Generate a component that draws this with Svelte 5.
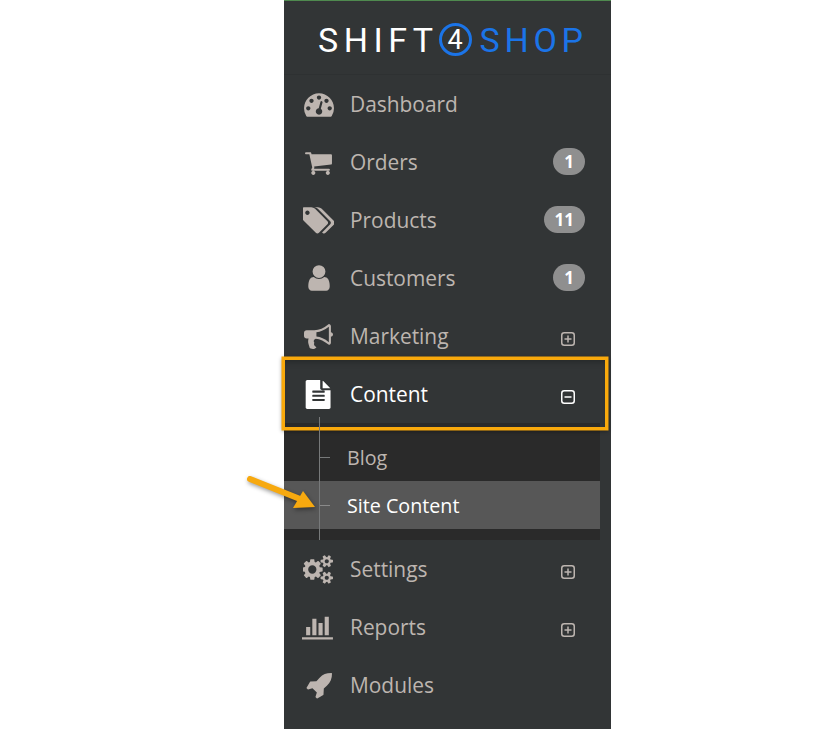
<script>
  const icons = {
    dashboard: { box: '0 0 1792 1792', d: 'M384 1152q0-53-37.500-90.500t-90.500-37.500-90.500 37.500-37.500 90.500 37.500 90.500 90.500 37.500 90.500-37.500 37.500-90.500zm192-448q0-53-37.500-90.500t-90.500-37.500-90.500 37.500-37.500 90.500 37.500 90.500 90.500 37.500 90.500-37.500 37.500-90.500zm428 481l101-382q6-26-7.500-48.500t-38.500-29.500-48 6.500-30 39.500l-101 382q-60 5-107 43.500t-63 98.500q-20 77 20 146t117 89 146-20 89-117q16-60-6-117t-72-91zm660-33q0-53-37.500-90.500t-90.500-37.500-90.500 37.500-37.500 90.500 37.500 90.500 90.500 37.500 90.500-37.500 37.500-90.500zm-640-640q0-53-37.500-90.500t-90.500-37.500-90.500 37.500-37.500 90.500 37.500 90.500 90.500 37.500 90.500-37.500 37.500-90.500zm448 192q0-53-37.500-90.500t-90.500-37.500-90.500 37.500-37.500 90.500 37.500 90.500 90.500 37.500 90.500-37.500 37.500-90.500zm320 448q0 261-141 483-19 29-54 29h-1402q-35 0-54-29-141-221-141-483 0-182 71-348t191-286 286-191 348-71 348 71 286 191 191 286 71 348z' },
    cart: { box: '0 0 1792 1792', d: 'M704 1536q0 52-38 90t-90 38-90-38-38-90 38-90 90-38 90 38 38 90zm896 0q0 52-38 90t-90 38-90-38-38-90 38-90 90-38 90 38 38 90zm128-1088v512q0 24-16.500 42.500t-40.500 21.500l-1044 122q13 60 13 70 0 16-24 64h920q26 0 45 19t19 45-19 45-45 19h-1024q-26 0-45-19t-19-45q0-11 8-31.500t16-36 21.500-40 15.500-29.500l-177-823h-204q-26 0-45-19t-19-45 19-45 45-19h256q16 0 28.500 6.500t19.500 15.500 13 24.500 8 26 5.500 29.500 4.500 26h1201q26 0 45 19t19 45z' },
    tags: { box: '0 0 1792 1792', d: 'M384 448q0-53-37.500-90.500t-90.500-37.500-90.500 37.500-37.500 90.500 37.500 90.500 90.500 37.500 90.500-37.500 37.500-90.500zm1067 576q0 53-37 90l-491 492q-39 37-91 37-53 0-90-37l-715-716q-38-37-64.500-101t-26.500-117v-416q0-52 38-90t90-38h416q53 0 117 26.500t102 64.500l715 714q37 39 37 91zm384 0q0 53-37 90l-491 492q-39 37-91 37-36 0-59-14t-53-45l470-470q37-37 37-90 0-52-37-91l-715-714q-38-38-102-64.500t-117-26.500h224q53 0 117 26.500t102 64.500l715 714q37 39 37 91z' },
    user: { box: '0 0 1792 1792', d: 'M1536 1399q0 109-62.500 187t-150.500 78h-854q-88 0-150.500-78t-62.500-187q0-85 8.500-160.500t31.500-152 58.500-131 94-89 134.500-34.500q131 128 313 128t313-128q76 0 134.500 34.500t94 89 58.500 131 31.500 152 8.500 160.500zm-256-887q0 159-112.500 271.500t-271.500 112.500-271.500-112.500-112.500-271.500 112.500-271.500 271.500-112.500 271.500 112.500 112.500 271.500z' },
    bullhorn: { box: '0 0 1792 1792', d: 'M1664 640q53 0 90.500 37.500t37.500 90.500-37.500 90.500-90.500 37.500v384q0 52-38 90t-90 38q-417-347-812-380-58 19-91 66t-31 100.500 40 92.500q-20 33-23 65.500t6 58 33.500 55 48 50 61.500 50.500q-29 58-111.500 83t-168.500 11.500-132-55.500q-7-23-29.500-87.500t-32-94.500-23-89-15-101 3.500-98.500 22-110.500h-122q-66 0-113-47t-47-113v-192q0-66 47-113t113-47h480q435 0 896-384 52 0 90 38t38 90v384zm-128 604v-954q-394 302-768 343v270q377 42 768 341z' },
    file: { box: '0 0 1792 1792', d: 'M1596 476q14 14 28 36h-472v-472q22 14 36 28zm-476 164h520v1056q0 40-28 68t-68 28h-1344q-40 0-68-28t-28-68v-1600q0-40 28-68t68-28h800v520q0 40 28 68t68 28zm160 624v-64q0-14-9-23t-23-9h-704q-14 0-23 9t-9 23v64q0 14 9 23t23 9h704q14 0 23-9t9-23zm0-256v-64q0-14-9-23t-23-9h-704q-14 0-23 9t-9 23v64q0 14 9 23t23 9h704q14 0 23-9t9-23zm0-256v-64q0-14-9-23t-23-9h-704q-14 0-23 9t-9 23v64q0 14 9 23t23 9h704q14 0 23-9t9-23z' },
    gears: { box: '0 0 1920 1792', d: 'M832 896q0-106-75-181t-181-75-181 75-75 181 75 181 181 75 181-75 75-181zm768 512q0-52-38-90t-90-38-90 38-38 90q0 53 37.500 90.500t90.500 37.500 90.500-37.500 37.500-90.500zm0-1024q0-52-38-90t-90-38-90 38-38 90q0 53 37.500 90.500t90.500 37.500 90.500-37.500 37.500-90.500zm-384 421v185q0 10-7 19.500t-16 10.500l-155 24q-11 35-32 76 34 48 90 115 7 11 7 20 0 12-7 19-23 30-82.500 89.500t-78.500 59.500q-11 0-21-7l-115-90q-37 19-77 31-11 108-23 155-7 24-30 24h-186q-11 0-20-7.500t-10-17.500l-23-153q-34-10-75-31l-118 89q-7 7-20 7-11 0-21-8-144-133-144-160 0-9 7-19 10-14 41-53t47-61q-23-44-35-82l-152-24q-10-1-17-9.500t-7-19.500v-185q0-10 7-19.500t16-10.500l155-24q11-35 32-76-34-48-90-115-7-11-7-20 0-12 7-20 22-30 82-89t79-59q11 0 21 7l115 90q34-18 77-32 11-108 23-154 7-24 30-24h186q11 0 20 7.500t10 17.500l23 153q34 10 75 31l118-89q8-7 20-7 11 0 21 8 144 133 144 160 0 8-7 19-12 16-42 54t-45 60q23 48 34 82l152 23q10 2 17 10.500t7 19.500zm640 533v140q0 16-149 31-12 27-30 52 51 113 51 138 0 4-4 7-122 71-124 71-8 0-46-47t-52-68q-20 2-30 2t-30-2q-14 21-52 68t-46 47q-2 0-124-71-4-3-4-7 0-25 51-138-18-25-30-52-149-15-149-31v-140q0-16 149-31 13-29 30-52-51-113-51-138 0-4 4-7 4-2 35-20t59-34 30-16q8 0 46 46.500t52 67.500q20-2 30-2t30 2q51-71 92-112l6-2q4 0 124 70 4 3 4 7 0 25-51 138 17 23 30 52 149 15 149 31zm0-1024v140q0 16-149 31-12 27-30 52 51 113 51 138 0 4-4 7-122 71-124 71-8 0-46-47t-52-68q-20 2-30 2t-30-2q-14 21-52 68t-46 47q-2 0-124-71-4-3-4-7 0-25 51-138-18-25-30-52-149-15-149-31v-140q0-16 149-31 13-29 30-52-51-113-51-138 0-4 4-7 4-2 35-20t59-34 30-16q8 0 46 46.500t52 67.500q20-2 30-2t30 2q51-71 92-112l6-2q4 0 124 70 4 3 4 7 0 25-51 138 17 23 30 52 149 15 149 31z' },
    chart: { box: '0 0 2048 1792', d: 'M512 896v512h-256v-512h256zm384-512v1024h-256v-1024h256zm1024 1152v128h-2048v-1536h128v1408h1920zm-640-896v768h-256v-768h256zm384-384v1152h-256v-1152h256z' },
    rocket: { box: '0 0 1792 1792', d: 'M1728 160q0 249-75.500 430.500t-253.500 360.500q-81 80-195 176l-20 379q-2 16-16 26l-384 224q-7 4-16 4-12 0-23-9l-64-64q-13-14-8-32l85-276-281-281-276 85q-3 1-9 1-14 0-23-9l-64-64q-17-19-5-39l224-384q10-14 26-16l379-20q96-114 176-195 188-187 358-258t431-71q14 0 24 9.500t10 22.500z' }
  };

  const before = [
    { label: 'Dashboard', icon: 'dashboard', size: 30 },
    { label: 'Orders', icon: 'cart', size: 29, badge: '1' },
    { label: 'Products', icon: 'tags', size: 31, badge: '11' },
    { label: 'Customers', icon: 'user', size: 30, badge: '1' },
    { label: 'Marketing', icon: 'bullhorn', size: 29, toggle: 'plus' },
    { label: 'Content', icon: 'file', size: 29, toggle: 'minus', active: true }
  ];

  const after = [
    { label: 'Settings', icon: 'gears', size: 31, toggle: 'plus' },
    { label: 'Reports', icon: 'chart', size: 34, toggle: 'plus' },
    { label: 'Modules', icon: 'rocket', size: 28 }
  ];
</script>

{#snippet row(item)}
  <div class="item" class:active={item.active}>
    <span class="icon-slot">
      <svg width={item.size} height={item.size} viewBox={icons[item.icon].box} fill="currentColor">
        <path d={icons[item.icon].d} />
      </svg>
    </span>
    <span class="label">{item.label}</span>
    {#if item.badge}
      <span class="badge">{item.badge}</span>
    {/if}
    {#if item.toggle}
      <svg class="toggle" width="14" height="14" viewBox="0 0 14 14" fill="none" stroke="currentColor" stroke-width="1.500">
        <rect x="0.750" y="0.750" width="12.500" height="12.500" rx="2.500" />
        <path d="M3.500 7h7" />
        {#if item.toggle === 'plus'}
          <path d="M7 3.500v7" />
        {/if}
      </svg>
    {/if}
  </div>
{/snippet}

<div class="page">
  <nav class="sidebar">
    <div class="logo">
      <span class="word">SHIFT</span>
      <span class="four">4</span>
      <span class="word blue">SHOP</span>
    </div>

    {#each before as item}
      {@render row(item)}
    {/each}

    <div class="submenu">
      <div class="subitem">Blog</div>
      <div class="subitem current">Site Content</div>
    </div>

    {#each after as item}
      {@render row(item)}
    {/each}

    <div class="highlight"></div>
    <svg class="arrow" width="80" height="50" viewBox="0 0 80 50">
      <path d="M4 4 L54 24" stroke="#f7a90f" stroke-width="6" stroke-linecap="round" fill="none" />
      <path d="M69 32 L47 33 L57 16 Z" fill="#f7a90f" />
    </svg>
  </nav>
</div>

<style>
  :global(body) {
    background: #fff;
  }

  .page {
    padding-left: 284px;
    font-family: 'Open Sans', 'Noto Sans', sans-serif;
  }

  .sidebar {
    position: relative;
    width: 327px;
    height: 729px;
    background: #323536;
    border-top: 1px solid #4f8a4f;
    box-sizing: border-box;
  }

  .logo {
    height: 74px;
    display: flex;
    align-items: center;
    box-sizing: border-box;
    padding: 4px 0 0 34px;
    border-bottom: 1px solid #2e3132;
    font-family: 'Roboto', sans-serif;
    font-size: 34px;
    color: #fff;
  }

  .word {
    letter-spacing: 5.500px;
  }

  .blue {
    color: #1b74e8;
    margin-left: 8px;
    letter-spacing: 4.700px;
  }

  .four {
    width: 33px;
    height: 33px;
    flex: none;
    border: 3px solid #1b74e8;
    border-radius: 50%;
    box-sizing: border-box;
    display: flex;
    align-items: center;
    justify-content: center;
    font-size: 27px;
  }

  .item {
    height: 58px;
    display: flex;
    align-items: center;
    padding: 0 26px 0 18px;
    color: #bdb5b0;
    font-size: 20.900px;
  }

  .item.active {
    color: #fff;
  }

  .icon-slot {
    width: 33px;
    flex: none;
    display: flex;
    align-items: center;
    justify-content: center;
    margin-right: 15px;
  }

  .icon-slot svg {
    display: block;
  }

  .label {
    flex: 1;
    margin-top: -1px;
  }

  .badge {
    min-width: 32px;
    height: 27px;
    padding: 0 11px;
    box-sizing: border-box;
    border-radius: 14px;
    background: #8f8f8f;
    color: #fff;
    font-size: 17px;
    font-weight: 700;
    display: flex;
    align-items: center;
    justify-content: center;
    margin-top: -1px;
  }

  .toggle {
    margin: 5px 10px 0 0;
  }

  .submenu {
    width: 316px;
    height: 117px;
    box-sizing: border-box;
    padding-top: 10px;
    background: #2a2a2a;
    position: relative;
  }

  .submenu::before {
    content: '';
    position: absolute;
    z-index: 1;
    left: 35px;
    top: -6px;
    bottom: 0;
    width: 1px;
    background: #77797a;
  }

  .subitem {
    position: relative;
    height: 48px;
    padding-left: 63px;
    display: flex;
    align-items: center;
    color: #bdb5b0;
    font-size: 19.700px;
  }

  .subitem::before {
    content: '';
    position: absolute;
    left: 35px;
    top: 24px;
    width: 11px;
    height: 1px;
    background: #77797a;
  }

  .subitem.current {
    background: #575757;
    color: #fff;
  }

  .subitem.current::before {
    background: #8a8a8a;
  }

  .highlight {
    position: absolute;
    left: -2px;
    top: 356px;
    width: 326px;
    height: 73px;
    box-sizing: border-box;
    border: 3px solid #f9a90c;
    box-shadow: 0 0 0 0.500px #f9a90c, 0 1px 4px rgba(0, 0, 0, 0.45), inset 0 6px 6px -4px rgba(0, 0, 0, 0.25);
    pointer-events: none;
  }

  .arrow {
    position: absolute;
    z-index: 2;
    left: -38px;
    top: 474px;
    filter: drop-shadow(1px 2px 2px rgba(0, 0, 0, 0.4));
  }
</style>
